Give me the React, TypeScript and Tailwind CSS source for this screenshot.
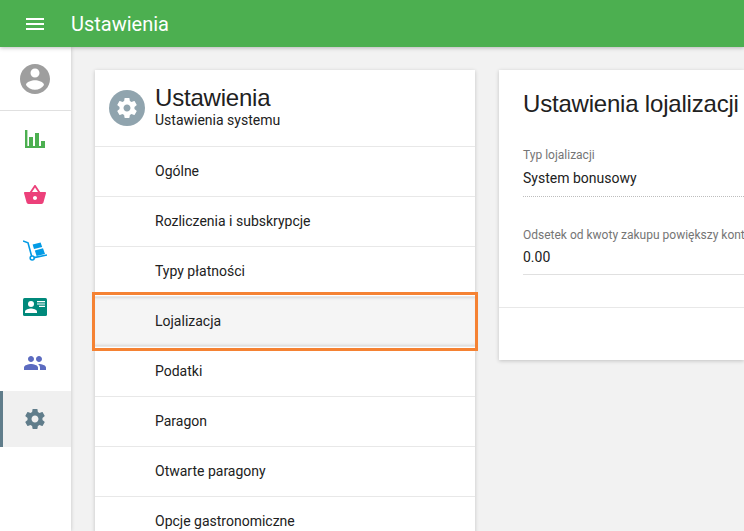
const roboto = "font-['Roboto',sans-serif]";

const MENU = [
  "Ogólne",
  "Rozliczenia i subskrypcje",
  "Typy płatności",
  "Lojalizacja",
  "Podatki",
  "Paragon",
  "Otwarte paragony",
  "Opcje gastronomiczne",
];

const GEAR =
  "M19.43 12.98c.04-.32.07-.64.07-.98s-.03-.66-.07-.98l2.11-1.65c.19-.15.24-.42.12-.64l-2-3.46c-.12-.22-.39-.3-.61-.22l-2.49 1c-.52-.4-1.08-.73-1.69-.98l-.38-2.65C14.46 2.18 14.25 2 14 2h-4c-.25 0-.46.18-.49.42l-.38 2.65c-.61.25-1.17.59-1.69.98l-2.49-1c-.23-.09-.49 0-.61.22l-2 3.46c-.13.22-.07.49.12.64l2.11 1.65c-.04.32-.07.65-.07.98s.03.66.07.98l-2.11 1.65c-.19.15-.24.42-.12.64l2 3.46c.12.22.39.3.61.22l2.49-1c.52.4 1.08.73 1.69.98l.38 2.65c.03.24.24.42.49.42h4c.25 0 .46-.18.49-.42l.38-2.65c.61-.25 1.17-.59 1.69-.98l2.49 1c.23.09.49 0 .61-.22l2-3.46c.12-.22.07-.49-.12-.64l-2.11-1.65zM12 15.5c-1.93 0-3.5-1.57-3.5-3.5s1.57-3.5 3.5-3.5 3.5 1.57 3.5 3.5-1.57 3.5-3.5 3.5z";

function Icon({ d, className }: { d: string; className: string }) {
  return (
    <svg viewBox="0 0 24 24" className={className} fill="currentColor">
      <path d={d} />
    </svg>
  );
}

function ChartIcon() {
  return (
    <svg viewBox="0 0 24 24" className="h-6 w-6 text-[#4caf50]" fill="currentColor">
      <path d="M2 3h2.4v16H2zM6 10h4v9H6zM12 6h4v13h-4zM18 14h4v5h-4zM2 19h20v2H2z" />
    </svg>
  );
}

function DollyIcon() {
  return (
    <svg viewBox="0 0 24 24" className="h-6 w-6 text-[#039be5]">
      <path d="M0 2 L5 3.8 L8.6 17" fill="none" stroke="currentColor" strokeWidth="1.6" />
      <path d="M11 18.6 L24 16" fill="none" stroke="currentColor" strokeWidth="1.6" />
      <circle cx="9.2" cy="19" r="2" fill="none" stroke="currentColor" strokeWidth="1.6" />
      <path d="M9.6 5.4 L17.6 3.4 L19.2 8 L11 10Z M11.8 11.4 L20 9.2 L22 15 L13.6 17Z" fill="currentColor" />
    </svg>
  );
}

function ContactIcon() {
  return (
    <svg viewBox="0 0 24 24" className="h-6 w-6 text-[#00897b]">
      <rect x="0" y="3" width="24" height="18" rx="1.5" fill="currentColor" />
      <circle cx="8" cy="9" r="3" fill="#fff" />
      <path d="M2 18v-1.5c0-2 4-3 6-3s6 1 6 3V18z" fill="#fff" />
      <path d="M14 6h8v1.2h-8zM14 8.4h8v1.2h-8zM16 10.8h6v1.2h-6z" fill="#fff" />
    </svg>
  );
}

function Sidebar() {
  return (
    <aside className="z-10 flex w-[71px] shrink-0 flex-col bg-white shadow-[0_0_4px_rgba(0,0,0,0.2)]">
      <div className="flex h-[64px] items-center justify-center border-b border-[#e0e0e0] pr-px">
        <Icon
          className="h-[36px] w-[36px] text-[#9e9e9e]"
          d="M12 2C6.48 2 2 6.48 2 12s4.48 10 10 10 10-4.48 10-10S17.52 2 12 2zm0 3c1.66 0 3 1.34 3 3s-1.34 3-3 3-3-1.34-3-3 1.34-3 3-3zm0 14.2c-2.5 0-4.71-1.28-6-3.22.03-1.99 4-3.08 6-3.08 1.99 0 5.97 1.09 6 3.08-1.29 1.94-3.5 3.22-6 3.22z"
        />
      </div>
      <div className="flex h-[56px] items-center justify-center pr-px">
        <ChartIcon />
      </div>
      <div className="flex h-[56px] items-center justify-center pr-px">
        <Icon
          className="h-6 w-6 text-[#ec407a]"
          d="M17.21 9l-4.38-6.56c-.19-.28-.51-.42-.83-.42-.32 0-.64.14-.83.43L6.79 9H2c-.55 0-1 .45-1 1 0 .09.01.18.04.27l2.54 9.27c.23.84 1 1.46 1.92 1.46h13c.92 0 1.69-.62 1.93-1.46l2.54-9.27L23 10c0-.55-.45-1-1-1h-4.79zM9 9l3-4.4L15 9H9zm3 8c-1.1 0-2-.9-2-2s.9-2 2-2 2 .9 2 2-.9 2-2 2z"
        />
      </div>
      <div className="flex h-[56px] items-center justify-center pr-px">
        <DollyIcon />
      </div>
      <div className="flex h-[56px] items-center justify-center pr-px">
        <ContactIcon />
      </div>
      <div className="flex h-[56px] items-center justify-center pr-px">
        <Icon
          className="h-6 w-6 text-[#5c6bc0]"
          d="M16 11c1.66 0 2.99-1.34 2.99-3S17.66 5 16 5c-1.66 0-3 1.34-3 3s1.34 3 3 3zm-8 0c1.66 0 2.99-1.34 2.99-3S9.66 5 8 5C6.34 5 5 6.34 5 8s1.34 3 3 3zm0 2c-2.33 0-7 1.17-7 3.5V19h14v-2.5c0-2.33-4.67-3.5-7-3.5zm8 0c-.29 0-.62.02-.97.05 1.16.84 1.97 1.97 1.97 3.45V19h6v-2.5c0-2.33-4.67-3.5-7-3.5z"
        />
      </div>
      <div className="flex h-[56px] items-center justify-center border-l-[3px] border-[#607d8b] bg-[#f0f0f0] pr-[4px]">
        <Icon className="h-6 w-6 text-[#607d8b]" d={GEAR} />
      </div>
    </aside>
  );
}

function MenuCard() {
  return (
    <section className="relative h-[500px] w-[380px] shrink-0 bg-white shadow-[0_1px_4px_rgba(0,0,0,0.2)]">
      <header className="flex h-[77px] items-center gap-[10px] border-b border-[#e8e8e8] pl-[14px]">
        <div className="flex h-9 w-9 items-center justify-center rounded-full bg-[#90a4ae]">
          <Icon className="h-6 w-6 text-white" d={GEAR} />
        </div>
        <div className="-mt-1">
          <h2 className="font-['Liberation_Sans',sans-serif] text-2xl leading-7 tracking-[-0.2px] text-[#212121]">
            Ustawienia
          </h2>
          <p className={`${roboto} text-sm leading-4 text-[#212121]`}>Ustawienia systemu</p>
        </div>
      </header>
      {MENU.map((label) => (
        <div
          key={label}
          className={`flex h-[50px] items-center border-b border-[#e8e8e8] pb-[2px] pl-[60px] ${roboto} text-sm text-[#212121] ${
            label === "Lojalizacja"
              ? "bg-[#f5f5f5] shadow-[inset_0_3px_3px_-2px_rgba(0,0,0,0.12),inset_0_-3px_3px_-2px_rgba(0,0,0,0.12)]"
              : ""
          }`}
        >
          {label}
        </div>
      ))}
      {/* orange highlight drawn over the active row */}
      <div className="absolute top-[222px] -right-[3px] -left-[3px] h-[59px] border-[3px] border-[#f58233]" />
    </section>
  );
}

function DetailCard() {
  return (
    <section className="h-[290px] w-[245px] shrink-0 overflow-hidden bg-white shadow-[0_1px_4px_rgba(0,0,0,0.2)]">
      <div className="h-[238px] border-b border-[#e8e8e8] pt-[20px] pl-[24px]">
        <h2 className="font-['Liberation_Sans',sans-serif] text-2xl leading-7 tracking-[-0.2px] whitespace-nowrap text-[#212121]">
          Ustawienia lojalizacji
        </h2>
        <div className={roboto}>
          <p className="mt-[30px] text-xs leading-[14px] text-[#757575]">Typ lojalizacji</p>
          <p className="mt-[6px] border-b border-dotted border-[#bdbdbd] pb-[8px] text-sm leading-5 text-[#212121]">
            System bonusowy
          </p>
          <p className="mt-[31px] text-xs leading-[14px] whitespace-nowrap text-[#757575]">
            Odsetek od kwoty zakupu powiększy konto bonusowe
          </p>
          <p className="mt-[5px] border-b border-[#e0e0e0] pb-[7px] text-sm leading-5 text-[#212121]">0.00</p>
        </div>
      </div>
    </section>
  );
}

export default function App() {
  return (
    <div className="flex h-[531px] w-[744px] flex-col overflow-hidden bg-[#f2f2f2]">
      <header className="z-20 flex h-[47px] shrink-0 items-center bg-[#4caf50] shadow-[0_1px_4px_rgba(0,0,0,0.25)]">
        <div className="mt-px ml-[26px] flex w-[18px] flex-col gap-[3px]">
          <span className="h-[2px] bg-white" />
          <span className="h-[2px] bg-white" />
          <span className="h-[2px] bg-white" />
        </div>
        <h1 className={`ml-[27px] ${roboto} text-xl text-white`}>Ustawienia</h1>
      </header>
      <div className="flex min-h-0 flex-1">
        <Sidebar />
        <main className="flex gap-6 pt-[23px] pl-6">
          <MenuCard />
          <DetailCard />
        </main>
      </div>
    </div>
  );
}
